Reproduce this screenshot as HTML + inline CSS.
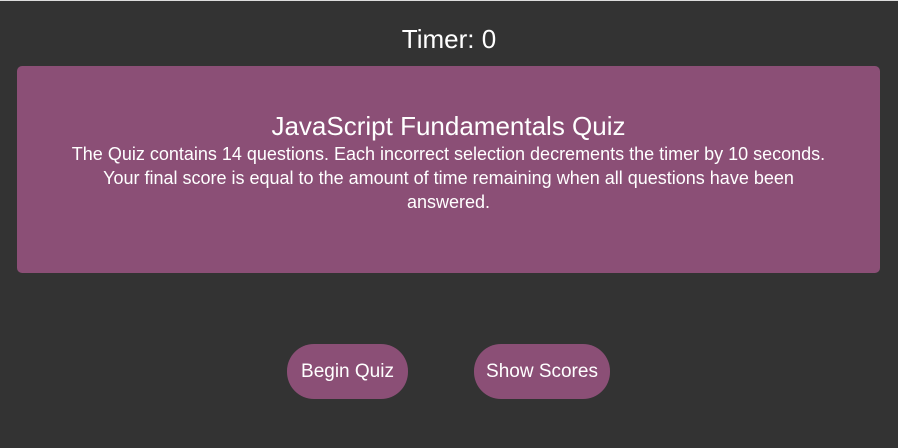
<!DOCTYPE html>
<html><head><style>
html,body{margin:0;padding:0;}
body{width:898px;height:448px;background:#333;position:relative;overflow:hidden;font-family:"Liberation Sans",sans-serif;color:#fff;border-top:1px solid #ddd;box-sizing:border-box;}
.t{position:absolute;top:23px;left:0;width:898px;text-align:center;font-size:26px;}
.box{position:absolute;left:17px;top:65px;width:863px;height:207px;background:#8b4f76;border-radius:5px;text-align:center;}
.box h1{font-weight:normal;font-size:26px;margin:44px 0 0;line-height:32px;}
.box p{font-size:18px;width:762px;margin:0 auto;line-height:24px;}
.b{position:absolute;top:343px;height:55px;background:#8b4f76;border-radius:27px;font-size:19px;line-height:55px;text-align:center;}
</style></head><body>
<div class="t">Timer: 0</div>
<div class="box"><h1>JavaScript Fundamentals Quiz</h1>
<p>The Quiz contains 14 questions. Each incorrect selection decrements the timer by 10 seconds. Your final score is equal to the amount of time remaining when all questions have been answered.</p></div>
<div class="b" style="left:287px;width:121px">Begin Quiz</div>
<div class="b" style="left:474px;width:136px">Show Scores</div>
</body></html>
